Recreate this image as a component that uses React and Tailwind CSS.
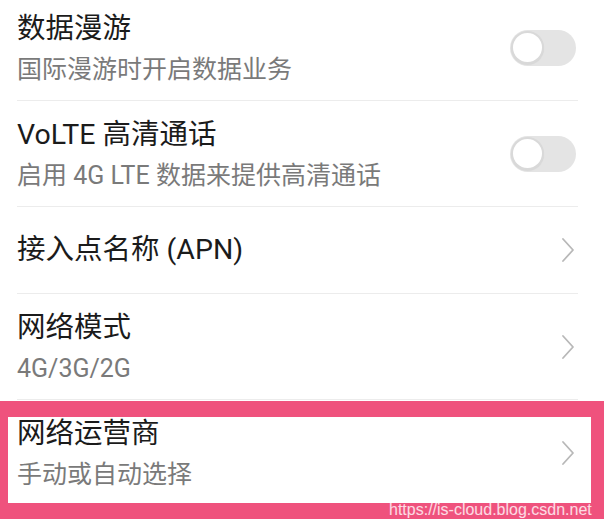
import React from 'react';

const font = { fontFamily: '"Roboto", "Noto Sans CJK SC", sans-serif' };

const Toggle = () => (
  <div className="w-[66px] h-[36px] rounded-full bg-[#e4e4e4] flex items-center pl-[1px]">
    <div className="w-[33px] h-[33px] rounded-full bg-white border-2 border-[#d9d9d9] shadow-[0_1px_1px_rgba(0,0,0,0.06)]" />
  </div>
);

const Chevron = () => (
  <svg width="14" height="26" viewBox="0 0 14 26" fill="none" className="mr-[1px]">
    <polyline points="2,2 12,13 2,24" stroke="#b8b8b8" strokeWidth="1.8" strokeLinecap="round" strokeLinejoin="round" />
  </svg>
);

const Divider = () => <div className="ml-[17px] mr-[26px] h-px bg-[#ececec]" />;

const Row = ({ title, subtitle, right }) => (
  <div className="flex items-center justify-between pl-[17px] pr-[28px] bg-white">
    {subtitle ? (
      <div className="pt-[14px] pb-[9px]">
        <div className="text-[28.5px] leading-[40px] text-[#1b1b1b]">{title}</div>
        <div className="text-[25px] leading-[42px] text-[#7a7a7a]">{subtitle}</div>
      </div>
    ) : (
      <div className="h-[86px] flex items-center">
        <div className="text-[28.5px] leading-[40px] text-[#1b1b1b]">{title}</div>
      </div>
    )}
    {right}
  </div>
);

export default function App() {
  return (
    <div className="w-[604px] h-[528px] bg-white overflow-hidden relative" style={font}>
      <div className="-mt-[5px]">
        <Row title="数据漫游" subtitle="国际漫游时开启数据业务" right={<Toggle />} />
        <Divider />
        <Row title="VoLTE 高清通话" subtitle="启用 4G LTE 数据来提供高清通话" right={<Toggle />} />
        <Divider />
        <Row title="接入点名称 (APN)" right={<Chevron />} />
        <Divider />
        <Row title="网络模式" subtitle="4G/3G/2G" right={<Chevron />} />
        <Divider />
        <Row title="网络运营商" subtitle="手动或自动选择" right={<Chevron />} />
      </div>

      {/* annotation frame */}
      <div className="absolute left-0 top-[401px] w-[604px] h-[118px] border-l-[8px] border-t-[16px] border-r-[13px] border-b-[16px] border-[#ef527d]" />

      {/* watermark */}
      <div
        className="absolute left-[389px] top-[500px] text-[16px] leading-[20px] text-white/80 whitespace-nowrap"
        style={{ fontFamily: '"Liberation Sans", Arial, sans-serif' }}
      >
        https://is-cloud.blog.csdn.net
      </div>
    </div>
  );
}
